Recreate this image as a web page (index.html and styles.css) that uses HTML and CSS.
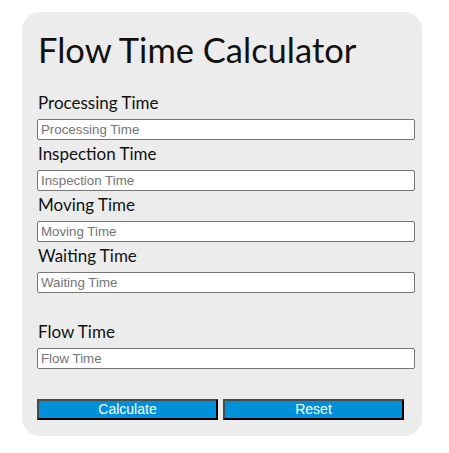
FILE: index.html
```html
<!DOCTYPE html>
<html>
<head>
<meta charset="utf-8">
<link rel="stylesheet" href="styles.css">
</head>
<body>
<div class="card">
  <h1 class="title">Flow Time Calculator</h1>
  <div class="fields">
    <label class="label">Processing Time</label>
    <input class="field" type="text" placeholder="Processing Time">
    <label class="label">Inspection Time</label>
    <input class="field" type="text" placeholder="Inspection Time">
    <label class="label">Moving Time</label>
    <input class="field" type="text" placeholder="Moving Time">
    <label class="label">Waiting Time</label>
    <input class="field" type="text" placeholder="Waiting Time">
    <label class="label result">Flow Time</label>
    <input class="field" type="text" placeholder="Flow Time">
  </div>
  <div class="buttons">
    <button class="btn">Calculate</button>
    <button class="btn">Reset</button>
  </div>
</div>
</body>
</html>
```

FILE: styles.css
```css
html, body {
  margin: 0;
  padding: 0;
  background: #ffffff;
}
body {
  padding: 12px 0 0 22px;
}
.card {
  width: 400px;
  box-sizing: border-box;
  background: #ececec;
  border-radius: 18px;
  padding: 0 0 16px 15px;
}
.title {
  margin: 0;
  padding-top: 16px;
  font-family: "Lato", "Open Sans", sans-serif;
  font-weight: 400;
  font-size: 34.5px;
  line-height: 44px;
  color: #111;
  padding-left: 1px;
}
.fields {
  display: flex;
  flex-direction: column;
  margin-top: 17px;
}
.label {
  display: block;
  font-family: "Lato", "Open Sans", sans-serif;
  font-size: 17px;
  line-height: 21px;
  padding-top: 3px;
  margin-bottom: 6px;
  padding-left: 1px;
  color: #111;
}
.label.result {
  padding-top: 28px;
}
.field {
  width: 378px;
  height: 21px;
  box-sizing: border-box;
  margin: 0;
  border: 1px solid #767676;
  border-radius: 2px;
  padding: 1px 3px;
  font-family: "Liberation Sans", Arial, sans-serif;
  font-size: 13.3px;
  background: #fff;
}
.field::placeholder {
  color: #757575;
}
.buttons {
  display: flex;
  gap: 5px;
  margin-top: 30px;
}
.btn {
  width: 181px;
  height: 21px;
  box-sizing: border-box;
  margin: 0;
  padding: 0;
  background: #0090d9;
  color: #fff;
  border: 2px solid;
  border-color: #4a4a4a #000 #000 #4a4a4a;
  font-family: "Liberation Sans", Arial, sans-serif;
  font-size: 14px;
  line-height: 17px;
}
```
